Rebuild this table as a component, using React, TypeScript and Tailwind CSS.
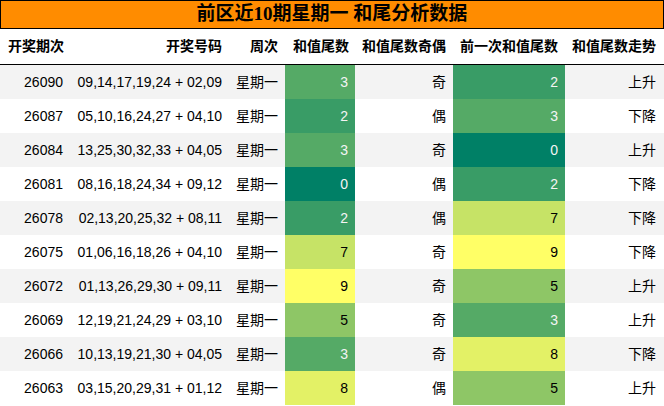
const rows = [
  { id: '26090', nums: '09,14,17,19,24 + 02,09', tail: 3, odd: '奇', prev: 2, trend: '上升' },
  { id: '26087', nums: '05,10,16,24,27 + 04,10', tail: 2, odd: '偶', prev: 3, trend: '下降' },
  { id: '26084', nums: '13,25,30,32,33 + 04,05', tail: 3, odd: '奇', prev: 0, trend: '上升' },
  { id: '26081', nums: '08,16,18,24,34 + 09,12', tail: 0, odd: '偶', prev: 2, trend: '下降' },
  { id: '26078', nums: '02,13,20,25,32 + 08,11', tail: 2, odd: '偶', prev: 7, trend: '下降' },
  { id: '26075', nums: '01,06,16,18,26 + 04,10', tail: 7, odd: '奇', prev: 9, trend: '下降' },
  { id: '26072', nums: '01,13,26,29,30 + 09,11', tail: 9, odd: '奇', prev: 5, trend: '上升' },
  { id: '26069', nums: '12,19,21,24,29 + 03,10', tail: 5, odd: '奇', prev: 3, trend: '上升' },
  { id: '26066', nums: '10,13,19,21,30 + 04,05', tail: 3, odd: '奇', prev: 8, trend: '下降' },
  { id: '26063', nums: '03,15,20,29,31 + 01,12', tail: 8, odd: '偶', prev: 5, trend: '上升' },
];

// summer colormap, 0..9
const shade = (v: number) => {
  const x = v / 9;
  const r = Math.round(x * 255);
  const g = Math.round((0.5 + x / 2) * 255);
  return `rgb(${r},${g},102)`;
};

const cols = 'grid grid-cols-[70px_159px_56px_70px_98px_112px_98px]';

const ValueCell = ({ v }: { v: number }) => (
  <div
    className={`flex items-center justify-end pr-[7px] ${v <= 3 ? 'text-[#f4f4f4]' : 'text-black'}`}
    style={{ backgroundColor: shade(v) }}
  >
    {v}
  </div>
);

export default function App() {
  return (
    <div className="w-[664px] h-[406px] bg-white overflow-hidden font-['Liberation_Sans','Noto_Sans_CJK_SC',sans-serif] text-[14px] text-black">
      <div className="h-[29px] bg-[#ff8c00] border border-black flex items-center justify-center font-bold text-[19px] font-['Liberation_Serif','Noto_Sans_CJK_SC',serif]">
        前区近10期星期一 和尾分析数据
      </div>
      <div className={`${cols} h-[36px] border-b border-black font-bold`}>
        <div className="flex items-center justify-start pl-[8px]">开奖期次</div>
        <div className="flex items-center justify-end pr-[7px]">开奖号码</div>
        <div className="flex items-center justify-end pr-[7px]">周次</div>
        <div className="flex items-center justify-end pr-[6px]">和值尾数</div>
        <div className="flex items-center justify-end pr-[7px]">和值尾数奇偶</div>
        <div className="flex items-center justify-end pr-[7px]">前一次和值尾数</div>
        <div className="flex items-center justify-end pr-[7px]">和值尾数走势</div>
      </div>
      {rows.map((r, i) => (
        <div key={r.id} className={`${cols} h-[34px] ${i % 2 === 0 ? 'bg-[#f3f3f3]' : 'bg-white'}`}>
          <div className="flex items-center justify-end pr-[7px]">{r.id}</div>
          <div className="flex items-center justify-end pr-[7px]">{r.nums}</div>
          <div className="flex items-center justify-end pr-[7px]">星期一</div>
          <ValueCell v={r.tail} />
          <div className="flex items-center justify-end pr-[7px]">{r.odd}</div>
          <ValueCell v={r.prev} />
          <div className="flex items-center justify-end pr-[7px]">{r.trend}</div>
        </div>
      ))}
    </div>
  );
}
